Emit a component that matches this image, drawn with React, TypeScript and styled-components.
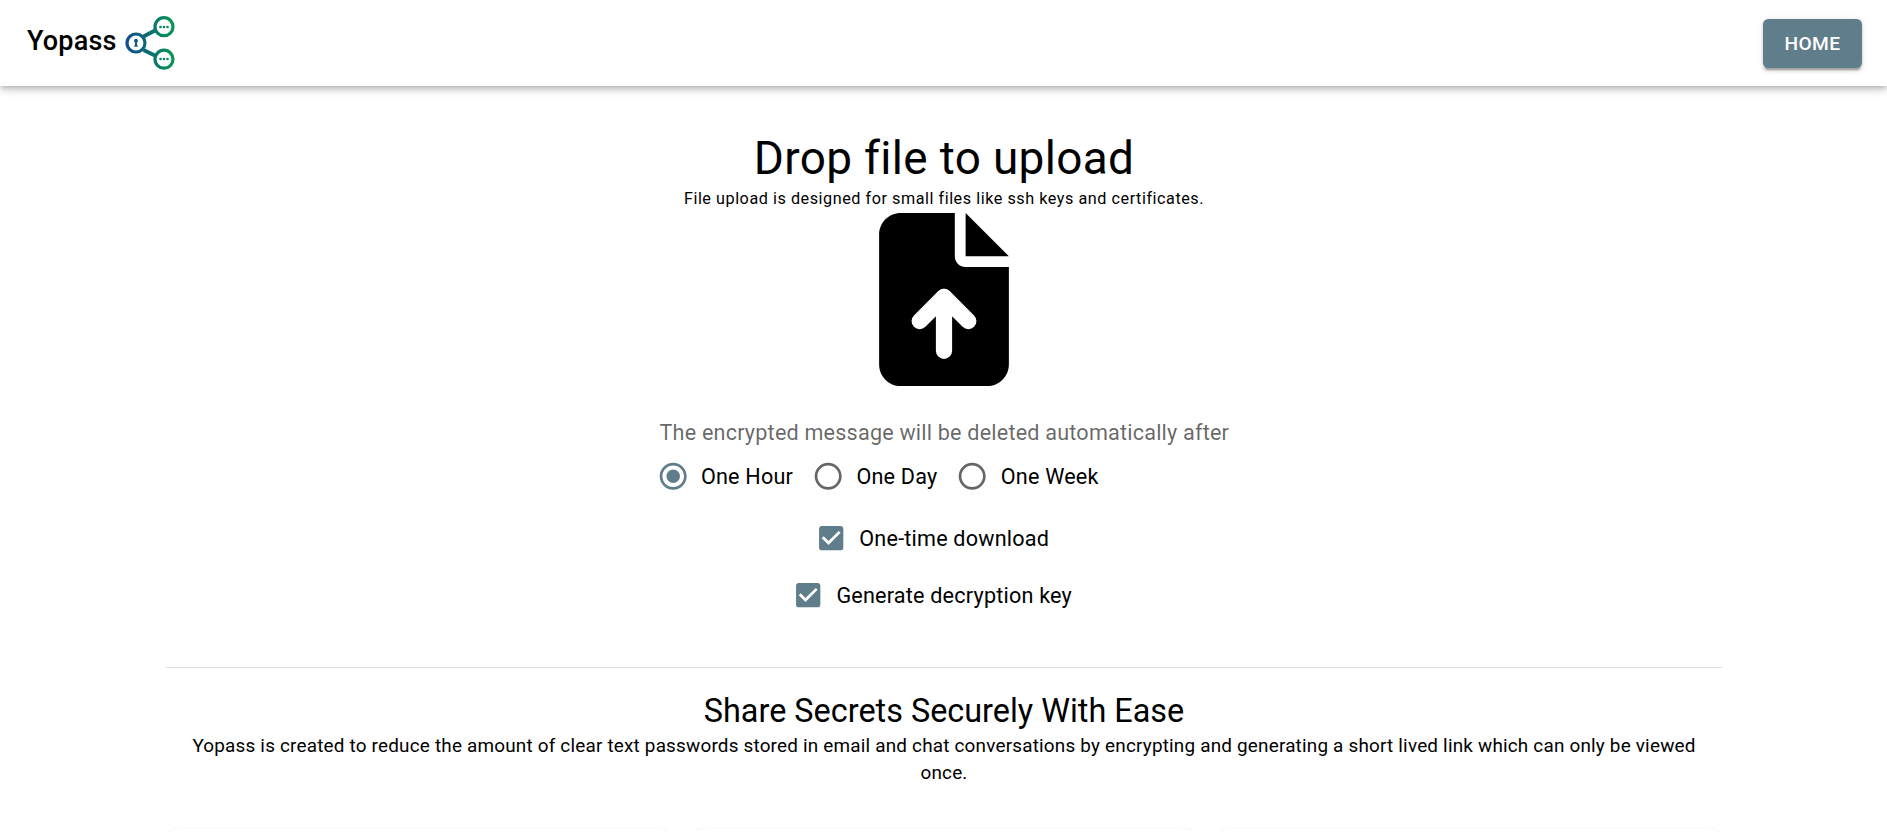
import React from 'react';
import styled, { createGlobalStyle } from 'styled-components';

const GlobalStyle = createGlobalStyle`
  html, body { margin: 0; height: 100%; overflow: hidden; background: #fff; }
  body { font-family: Roboto, "Liberation Sans", sans-serif; color: #000; }
  * { box-sizing: border-box; }
`;

const Page = styled.div`
  height: 832px;
  overflow: hidden;
  display: flex;
  flex-direction: column;
`;
const AppBar = styled.header`
  flex: none;
  height: 86px;
  padding: 0 25px 0 27px;
  display: flex;
  align-items: center;
  justify-content: space-between;
  background: #fff;
  box-shadow: 0 2.7px 5.4px -1.35px rgba(0,0,0,.2), 0 5.4px 6.75px rgba(0,0,0,.14), 0 1.35px 13.5px rgba(0,0,0,.12);
`;
const Brand = styled.div`
  display: flex;
  align-items: center;
  font-size: 27px;
  font-weight: 500;
  line-height: 43px;
  letter-spacing: 0.2px;
`;
const BrandName = styled.span`
  margin-top: -4px;
`;
const Logo = styled.svg`
  display: block;
  width: 50px;
  height: 54px;
  margin-left: 8px;
`;
const HomeButton = styled.button`
  width: 99px;
  height: 49px;
  padding: 0;
  border: 0;
  border-radius: 5.4px;
  background: #607d8b;
  color: #fff;
  font: 500 19.2px/33px Roboto, sans-serif;
  letter-spacing: 0.4px;
  box-shadow: 0 4px 1.35px -2.7px rgba(0,0,0,.2), 0 2.7px 2.7px rgba(0,0,0,.14), 0 1.35px 6.75px rgba(0,0,0,.12);
`;
const Container = styled.main`
  width: 1557px;
  margin: 0 auto;
  padding-left: 1px;
  display: flex;
  flex-direction: column;
  align-items: center;
`;
const Title = styled.h1`
  margin: 44px 0 0;
  font-size: 45.9px;
  font-weight: 400;
  line-height: 57px;
  letter-spacing: 0.34px;
`;
const Caption = styled.p`
  margin: -2px 0 1px;
  font-size: 16.2px;
  line-height: 27px;
  letter-spacing: 0.54px;
`;
const FileIcon = styled.svg`
  display: block;
  width: 130px;
  height: 173px;
`;
const Expiration = styled.div`
  margin-top: 31px;
  width: 569px;
`;
const FormLabel = styled.div`
  font-size: 21.6px;
  line-height: 31px;
  letter-spacing: 0.2px;
  color: rgba(0,0,0,.6);
  white-space: nowrap;
`;
const RadioRow = styled.div`
  display: flex;
  height: 57px;
  margin-left: -3px;
`;
const Option = styled.label<{ $gap?: number }>`
  display: flex;
  align-items: center;
  gap: 12px;
  margin-right: ${p => p.$gap ?? 0}px;
  height: 57px;
  font-size: 21.6px;
  letter-spacing: 0.2px;
  white-space: nowrap;
`;
const ControlIcon = styled.svg<{ $muted?: boolean }>`
  display: block;
  width: 32.4px;
  height: 32.4px;
  fill: ${p => (p.$muted ? 'rgba(0,0,0,.6)' : '#607d8b')};
`;
const Checks = styled.div`
  margin-top: 5px;
  display: flex;
  flex-direction: column;
  align-items: center;
  padding-right: 24px;
`;
const Divider = styled.hr`
  width: 100%;
  height: 1px;
  border: 0;
  margin: 43px 0 0;
  background: rgba(0,0,0,.12);
`;
const Heading = styled.h2`
  margin: 22px 0 0;
  font-size: 32.4px;
  font-weight: 400;
  line-height: 43px;
`;
const Text = styled.p`
  margin: -1px 0 0;
  padding: 0 20px;
  text-align: center;
  font-size: 18.9px;
  line-height: 27px;
  letter-spacing: 0.2px;
`;
const Cards = styled.div`
  width: 100%;
  margin-top: 43px;
  display: grid;
  grid-template-columns: repeat(3, 1fr);
  gap: 22px;
`;
const Card = styled.div`
  height: 200px;
  border-radius: 11px;
  background: #fff;
  box-shadow: 0 2.7px 1.35px -1.35px rgba(0,0,0,.2), 0 1.35px 1.35px rgba(0,0,0,.14), 0 1.35px 4px rgba(0,0,0,.08);
`;

const Radio = ({ checked }: { checked?: boolean }) => (
  <ControlIcon viewBox="0 0 24 24" $muted={!checked}>
    <path d="M12 2C6.48 2 2 6.48 2 12s4.48 10 10 10 10-4.48 10-10S17.52 2 12 2zm0 18c-4.42 0-8-3.58-8-8s3.58-8 8-8 8 3.58 8 8-3.58 8-8 8z" />
    {checked && <circle cx="12" cy="12" r="5" />}
  </ControlIcon>
);
const Check = () => (
  <ControlIcon viewBox="0 0 24 24">
    <path d="M19 3H5c-1.11 0-2 .9-2 2v14c0 1.1.89 2 2 2h14c1.11 0 2-.9 2-2V5c0-1.1-.89-2-2-2zm-9 14l-5-5 1.41-1.41L10 14.17l7.59-7.59L19 8l-9 9z" />
  </ControlIcon>
);

const periods = ['One Hour', 'One Day', 'One Week'];

export default function App() {
  return (
    <Page>
      <GlobalStyle />
      <AppBar>
        <Brand>
          <BrandName>Yopass</BrandName>
          <Logo viewBox="0 0 50 54">
            <defs>
              <linearGradient id="ring" gradientUnits="userSpaceOnUse" x1="0" y1="27" x2="50" y2="27">
                <stop offset="0" stopColor="#134a94" />
                <stop offset=".5" stopColor="#0a7070" />
                <stop offset="1" stopColor="#04994e" />
              </linearGradient>
            </defs>
            <g fill="none" stroke="url(#ring)" strokeWidth="3.2">
              <circle cx="11" cy="27" r="9" />
              <circle cx="39" cy="10.700" r="9" />
              <circle cx="39" cy="43.200" r="9" />
              <path strokeWidth="4" d="M18.500 20.500L31 14M18.500 34L31 40" />
            </g>
            <g fill="url(#ring)">
              <circle cx="11" cy="24.800" r="2" />
              <path d="M10 25h2v3.500l1 2.300H9l1-2.300z" />
              <circle cx="35.500" cy="11" r="1.300" /><circle cx="39" cy="11" r="1.300" /><circle cx="42.500" cy="11" r="1.300" />
              <circle cx="35.500" cy="43" r="1.300" /><circle cx="39" cy="43" r="1.300" /><circle cx="42.500" cy="43" r="1.300" />
            </g>
          </Logo>
        </Brand>
        <HomeButton>HOME</HomeButton>
      </AppBar>
      <Container>
        <Title>Drop file to upload</Title>
        <Caption>File upload is designed for small files like ssh keys and certificates.</Caption>
        <FileIcon viewBox="0 0 384 512">
          <path d="M256 0v128h128zM224 128V0H64C28.700 0 0 28.700 0 64v384c0 35.300 28.700 64 64 64h256c35.300 0 64-28.700 64-64V160H256c-17.700 0-32-14.300-32-32z" />
          <path fill="none" stroke="#fff" strokeWidth="48" strokeLinecap="round" strokeLinejoin="round" d="M192 408V248M120 320l72-72 72 72" />
        </FileIcon>
        <Expiration>
          <FormLabel>The encrypted message will be deleted automatically after</FormLabel>
          <RadioRow>
            {periods.map((label, i) => (
              <Option key={label} $gap={19}><Radio checked={i === 0} />{label}</Option>
            ))}
          </RadioRow>
        </Expiration>
        <Checks>
          <Option><Check />One-time download</Option>
          <Option><Check />Generate decryption key</Option>
        </Checks>
        <Divider />
        <Heading>Share Secrets Securely With Ease</Heading>
        <Text>
          Yopass is created to reduce the amount of clear text passwords stored in email and chat conversations by
          encrypting and generating a short lived link which can only be viewed once.
        </Text>
        <Cards><Card /><Card /><Card /></Cards>
      </Container>
    </Page>
  );
}
